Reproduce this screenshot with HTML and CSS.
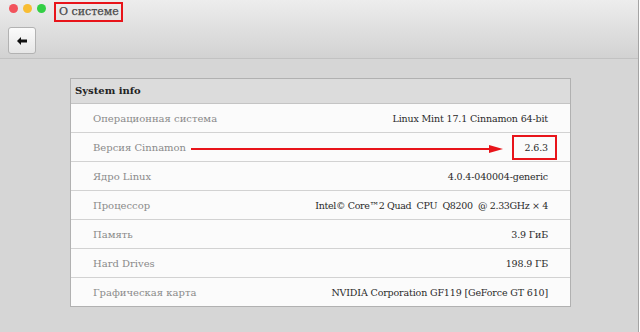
FILE: index.html
```html
<!DOCTYPE html>
<html lang="ru">
<head>
  <meta charset="UTF-8">
  <title>О системе</title>
  <link rel="stylesheet" href="styles.css">
</head>
<body>
  <div class="window">
    <div class="header">
      <div class="titlebar">
        <span class="light red"></span>
        <span class="light yellow"></span>
        <span class="light green"></span>
        <span class="title">О системе</span>
      </div>
      <div class="toolbar">
        <button class="back">
          <svg width="10" height="8" viewBox="0 0 10 8">
            <path d="M0 4 L4 0 L4 2.5 L10 2.5 L10 5.5 L4 5.5 L4 8 Z" fill="#111"/>
          </svg>
        </button>
      </div>
    </div>

    <div class="content">
      <div class="panel">
        <div class="panel-head">System info</div>
        <div class="row">
          <span class="label">Операционная система</span>
          <span class="value">Linux Mint 17.1 Cinnamon 64-bit</span>
        </div>
        <div class="row">
          <span class="label">Версия Cinnamon</span>
          <span class="value marked">2.6.3</span>
          <!-- annotation arrow drawn over the row -->
          <svg class="arrow" width="312" height="10" viewBox="0 0 312 10">
            <line x1="0" y1="5" x2="300" y2="5" stroke="#e8141a" stroke-width="2"/>
            <path d="M298 1 L312 5 L298 9 Z" fill="#e8141a"/>
          </svg>
        </div>
        <div class="row">
          <span class="label">Ядро Linux</span>
          <span class="value">4.0.4-040004-generic</span>
        </div>
        <div class="row">
          <span class="label">Процессор</span>
          <span class="value cpu">Intel© Core™2 Quad&nbsp; CPU&nbsp; Q8200&nbsp; @ 2.33GHz × 4</span>
        </div>
        <div class="row">
          <span class="label">Память</span>
          <span class="value">3.9 ГиБ</span>
        </div>
        <div class="row">
          <span class="label">Hard Drives</span>
          <span class="value">198.9 ГБ</span>
        </div>
        <div class="row">
          <span class="label">Графическая карта</span>
          <span class="value">NVIDIA Corporation GF119 [GeForce GT 610]</span>
        </div>
      </div>
    </div>
  </div>
</body>
</html>
```

FILE: styles.css
```css
body {
  margin: 0;
  width: 640px;
  height: 332px;
  overflow: hidden;
  background-color: #ffffff;
  font-family: "DejaVu Serif", "Liberation Serif", serif;
}

.window {
  width: 638px;
  height: 332px;
  border-right: 1px solid #a4a4a4;
  background-color: #d6d6d6;
  display: flex;
  flex-direction: column;
}

.header {
  height: 58px;
  border-bottom: 1px solid #c2c2c2;
  background: linear-gradient(#ededed, #d2d2d2);
}

.titlebar {
  height: 25px;
  display: flex;
  align-items: center;
  padding-left: 9px;
  gap: 5px;
}

.light {
  width: 9px;
  height: 9px;
  border-radius: 50%;
  margin-top: -8px;
}

.light.red { background-color: #f2535c; }
.light.yellow { background-color: #f8bd33; }
.light.green { background-color: #33cf45; }

.title {
  margin-left: 3px;
  margin-top: -2px;
  padding: 1px 2px 2px 3px;
  border: 2px solid #e8141a;
  font-size: 11px;
  color: #4a4a4a;
  -webkit-text-stroke: 0.25px #4a4a4a;
}

.toolbar {
  padding: 2px 0 0 8px;
}

.back {
  width: 28px;
  height: 27px;
  border: 1px solid #b2b2b2;
  border-radius: 3px;
  background: linear-gradient(#fbfbfb, #e6e6e6);
  display: flex;
  align-items: center;
  justify-content: center;
  padding: 0;
}

.content {
  flex: 1;
  padding: 19px 0 0 70px;
}

.panel {
  width: 499px;
  border: 1px solid #b1b1b1;
  background-color: #fbfbfb;
}

.panel-head {
  height: 24px;
  line-height: 24px;
  padding-left: 4px;
  background-color: #dcdcdc;
  border-bottom: 1px solid #c4c4c4;
  font-size: 10px;
  font-weight: bold;
  color: #222;
}

.row {
  position: relative;
  height: 28px;
  display: flex;
  align-items: center;
  justify-content: space-between;
  padding: 0 22px 0 22px;
  border-bottom: 1px solid #d2d2d2;
  font-size: 10px;
}

.row:last-child {
  border-bottom: none;
}

.label {
  color: #8a8a8a;
}

.value {
  color: #2a2a2a;
  font-size: 9.5px;
  letter-spacing: -0.15px;
}

.value.cpu {
  letter-spacing: -0.35px;
}

.value.marked {
  margin-right: -9px;
  padding: 5px 7px 5px 11px;
  border: 2px solid #e8141a;
}

.arrow {
  position: absolute;
  left: 120px;
  top: 11px;
}
```
